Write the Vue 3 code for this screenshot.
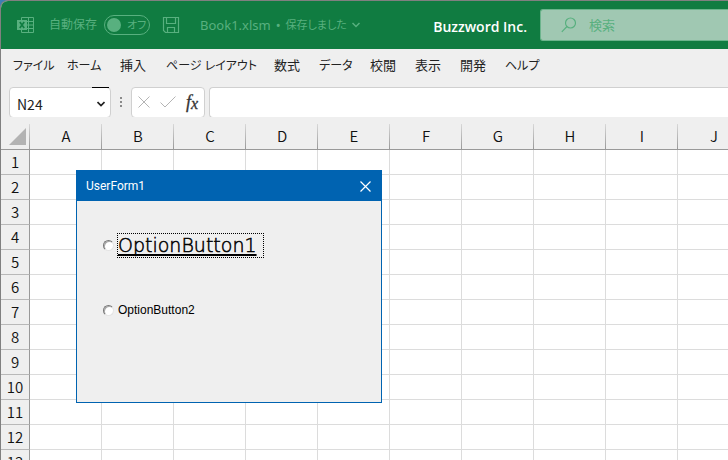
<script setup>
import { ref } from 'vue'

const autoSave = ref(false)
const search = ref('')
const cell = ref('N24')
const formula = ref('')
const option = ref('')
const menus = ['ファイル', 'ホーム', '挿入', 'ページ レイアウト', '数式', 'データ', '校閲', '表示', '開発', 'ヘルプ']
const isKana = (text) => /^[ァ-ー ]+$/.test(text)
const columns = 'ABCDEFGHIJ'.split('')
const rows = 13
</script>

<template>
  <div class="window">
    <header class="titlebar">
      <svg class="excel" width="18" height="18" viewBox="0 0 18 18" aria-hidden="true">
        <path d="M4.500 4V1.500h12v15h-12V14M4.500 5.500h12M10 9h6.500M10 12.500h6.500M11.500 1.500v15" fill="none" stroke="currentColor" />
        <rect x="0" y="4" width="10" height="10" fill="currentColor" />
        <path d="M2.800 6l4.400 6M7.200 6l-4.400 6" stroke="#107c41" stroke-width="1.700" />
      </svg>
      <label class="autosave">
        <span>自動保存</span>
        <span class="toggle">
          <input v-model="autoSave" type="checkbox" role="switch" />
          <span class="knob"></span>
          <span>オフ</span>
        </span>
      </label>
      <button class="save" type="button" aria-label="上書き保存">
        <svg width="18" height="18" viewBox="0 0 18 18" fill="none" stroke="currentColor" stroke-width="1.200">
          <path d="M1.500 1.500h15v15H3.500l-2-2zM4.500 1.500v6h9v-6M5.500 16.500v-5h7v5" />
        </svg>
      </button>
      <button class="book" type="button">
        <span>Book1.xlsm</span><span>•</span><span class="saved">保存しました</span>
        <svg width="8" height="6" viewBox="0 0 8 6" fill="none" stroke="currentColor" stroke-width="1.500"><path d="M.5 1L4 4.500 7.500 1" /></svg>
      </button>
      <strong class="company">Buzzword Inc.</strong>
      <label class="search">
        <svg width="16" height="16" viewBox="0 0 16 16" fill="none" stroke="currentColor" stroke-width="1.200">
          <circle cx="9.500" cy="6" r="5" /><path d="M6 9.500L.8 14.800" />
        </svg>
        <input v-model="search" type="search" placeholder="検索" aria-label="検索" />
      </label>
    </header>

    <nav class="menu">
      <a v-for="m in menus" :key="m" href="#" :class="{ kana: isKana(m) }">{{ m }}</a>
    </nav>

    <div class="formulabar">
      <div class="namebox">
        <input v-model="cell" type="text" aria-label="名前ボックス" />
        <button type="button" aria-label="名前の一覧">
          <svg width="8" height="6" viewBox="0 0 8 6" fill="none" stroke="#222" stroke-width="1.700"><path d="M.5 1L4 4.500 7.500 1" /></svg>
        </button>
      </div>
      <svg class="grip" width="2" height="10" viewBox="0 0 2 10" fill="#8a8a8a" aria-hidden="true">
        <path d="M0 0h2v2H0zM0 4h2v2H0zM0 8h2v2H0z" />
      </svg>
      <div class="actions">
        <button type="button" aria-label="キャンセル">
          <svg width="12" height="12" viewBox="0 0 12 12" fill="none" stroke="#b4b4b4"><path d="M.5 .5l11 11M11.500 .5l-11 11" /></svg>
        </button>
        <button type="button" aria-label="入力">
          <svg width="16" height="12" viewBox="0 0 16 12" fill="none" stroke="#b4b4b4"><path d="M.5 6.500l4.500 4.500L15.500 .5" /></svg>
        </button>
        <button class="fx" type="button" aria-label="関数の挿入"><i>f</i><i class="x">x</i></button>
      </div>
      <input v-model="formula" class="formula" type="text" aria-label="数式バー" />
    </div>

    <main class="sheet">
      <table>
        <thead>
          <tr>
            <th class="corner"><svg width="17" height="17" viewBox="0 0 17 17" aria-hidden="true"><path d="M17 0v17H0z" fill="#b3b3b3" /></svg></th>
            <th v-for="c in columns" :key="c" scope="col">{{ c }}</th>
          </tr>
        </thead>
        <tbody>
          <tr v-for="r in rows" :key="r">
            <th scope="row">{{ r }}</th>
            <td v-for="c in columns" :key="c"></td>
          </tr>
        </tbody>
      </table>

      <section class="dialog" role="dialog" aria-labelledby="form-title">
        <div class="dialog-bar">
          <span id="form-title">UserForm1</span>
          <button type="button" aria-label="閉じる">
            <svg width="11" height="11" viewBox="0 0 11 11" fill="none" stroke="#fff" stroke-width="1.200"><path d="M.5 .5l10 10M10.500 .5l-10 10" /></svg>
          </button>
        </div>
        <div class="dialog-body">
          <label class="option large">
            <input v-model="option" type="radio" name="option" value="1" />
            <span>OptionButton1</span>
          </label>
          <label class="option">
            <input v-model="option" type="radio" name="option" value="2" />
            <span>OptionButton2</span>
          </label>
        </div>
      </section>
    </main>
  </div>
</template>

<style>
body {
  margin: 0;
  background: #3c7fb5;
}
</style>

<style scoped>
* {
  box-sizing: border-box;
}

.window {
  display: flex;
  flex-direction: column;
  height: 100vh;
  overflow: hidden;
  border: solid #808080;
  border-width: 1px 0 0 1px;
  border-radius: 8px 0 0 0;
  background: #efefef;
  color: #222;
  font: 13px/20px "Noto Sans", "Noto Sans CJK JP", sans-serif;
}

button {
  display: flex;
  align-items: center;
  justify-content: center;
  padding: 0;
  border: 0;
  background: none;
  color: inherit;
  font: inherit;
}

input {
  min-width: 0;
  margin: 0;
  padding: 0;
  border: 0;
  outline: 0;
  background: none;
  color: inherit;
  font: inherit;
}

.titlebar {
  display: flex;
  flex: none;
  align-items: center;
  height: 48px;
  padding-left: 16px;
  background: #107c41;
  color: #58b07f;
}

.excel {
  flex: none;
  margin-right: 14px;
}

.autosave {
  display: flex;
  flex: none;
  align-items: center;
  gap: 7px;
  font-size: 12px;
}

.toggle {
  position: relative;
  display: flex;
  align-items: center;
  gap: 6px;
  width: 46px;
  height: 20px;
  padding-left: 2px;
  border: 1px solid;
  border-radius: 10px;
  font-size: 11px;
  font-feature-settings: "palt";
  white-space: nowrap;
}

.toggle input {
  position: absolute;
  inset: 0;
  opacity: 0;
}

.knob {
  flex: none;
  width: 14px;
  height: 14px;
  border-radius: 50%;
  background: currentColor;
}

.save {
  flex: none;
  margin-left: 12px;
}

.book {
  flex: none;
  gap: 5px;
  margin-left: 20px;
  white-space: nowrap;
}

.saved {
  font-size: 11px;
  font-feature-settings: "palt";
}

.company {
  flex: none;
  margin: 4px 13px 0 auto;
  color: #fff;
  font: 600 14px/20px "Open Sans", sans-serif;
}

.search {
  display: flex;
  flex: none;
  align-items: center;
  gap: 12px;
  width: 188px;
  height: 32px;
  padding-left: 20px;
  border: 1px solid #6bb48c;
  border-right: 0;
  border-radius: 3px 0 0 3px;
  background: #a0c8b2;
}

.search input {
  flex: 1;
}

.search input::placeholder {
  color: #58b07f;
  opacity: 1;
}

.menu {
  display: grid;
  flex: none;
  grid-template-columns: 54px 53px 46px 108px 45px 51px 45px 45px 45px 45px;
  align-items: baseline;
  height: 32px;
  padding: 6px 0 0 12px;
}

.menu a {
  color: #222;
  font-feature-settings: "palt";
  text-decoration: none;
  white-space: nowrap;
}

.menu .kana {
  font-size: 12px;
}

.formulabar {
  display: flex;
  flex: none;
  align-items: center;
  height: 36px;
  padding: 6px 0 0 8px;
}

.namebox,
.actions,
.formula {
  height: 31px;
  border: 1px solid #d0d0d0;
  border-radius: 4px;
  background: #fff;
}

.namebox {
  display: flex;
  flex: none;
  width: 102px;
  padding-left: 7px;
  font: 14px/20px "Noto Sans CJK JP", sans-serif;
}

.namebox input {
  flex: 1;
  padding-top: 3px;
}

.namebox button {
  width: 17px;
  margin: -1px 1px 0 0;
  padding-top: 4px;
  border-top: 1px solid #000;
}

.grip {
  margin: 0 9px;
}

.actions {
  display: flex;
  flex: none;
  align-items: center;
  gap: 10px;
  width: 74px;
  padding-left: 6px;
}

.fx {
  color: #333;
  font: 18px/20px "Liberation Serif", serif;
  -webkit-text-stroke: 0.3px;
}

.x {
  padding-top: 4px;
  font-size: 16px;
}

.formula {
  flex: 1;
  margin-left: 4px;
  padding: 0 8px;
  border-right: 0;
  border-radius: 4px 0 0 4px;
}

.sheet {
  position: relative;
  flex: 1;
  min-height: 0;
  overflow: hidden;
  background: #fff;
}

table {
  width: 749px;
  table-layout: fixed;
  border-collapse: separate;
  border-spacing: 0;
  font: 15px/20px "Noto Sans CJK JP", sans-serif;
}

th,
td {
  height: 25px;
  padding: 0;
  border: solid #dcdcdc;
  border-width: 0 1px 1px 0;
}

th {
  background: #efefef;
  color: #111;
  font-weight: 350;
  text-align: center;
}

thead th {
  height: 33px;
  padding-top: 6px;
  border-right: 0;
  border-bottom-color: #999;
  background: linear-gradient(#d8d8d8, #999) right bottom / 1px 25px no-repeat #efefef;
}

.corner {
  width: 29px;
  padding: 6px 4px 0 0;
  line-height: 0;
  text-align: right;
}

tbody th {
  border-right-color: #999;
  border-bottom-color: #b8b8b8;
}

.dialog {
  position: absolute;
  top: 53px;
  left: 75px;
  width: 306px;
  border: 1px solid #0063b1;
  background: #efefef;
}

.dialog-bar {
  display: flex;
  align-items: center;
  justify-content: space-between;
  height: 30px;
  padding: 0 10px 0 9px;
  background: #0063b1;
  color: #fff;
  font: 12px/20px Roboto, sans-serif;
}

.dialog-body {
  display: flex;
  flex-direction: column;
  align-items: flex-start;
  gap: 42px;
  padding: 32px 26px 82px;
}

.option {
  display: flex;
  align-items: center;
  gap: 4px;
  color: #000;
  font: 12px/20px "Liberation Sans", sans-serif;
}

.option input {
  width: 11px;
  height: 11px;
  border: 1px solid #e4e4e4;
  border-top-color: #777;
  border-left-color: #777;
  border-radius: 50%;
  appearance: none;
  background: #fff;
  box-shadow: inset 1px 1px #aaa;
}

.option input:checked {
  background: radial-gradient(#000 2px, #fff 3px);
}

.large {
  gap: 3px;
  font: 200 19px/23px "DejaVu Sans", sans-serif;
  -webkit-text-stroke: 0.5px;
}

.large span {
  padding-right: 6px;
  border: 1px dotted #000;
  text-decoration: underline 2px;
  text-underline-offset: 2px;
  text-decoration-skip-ink: none;
}
</style>
